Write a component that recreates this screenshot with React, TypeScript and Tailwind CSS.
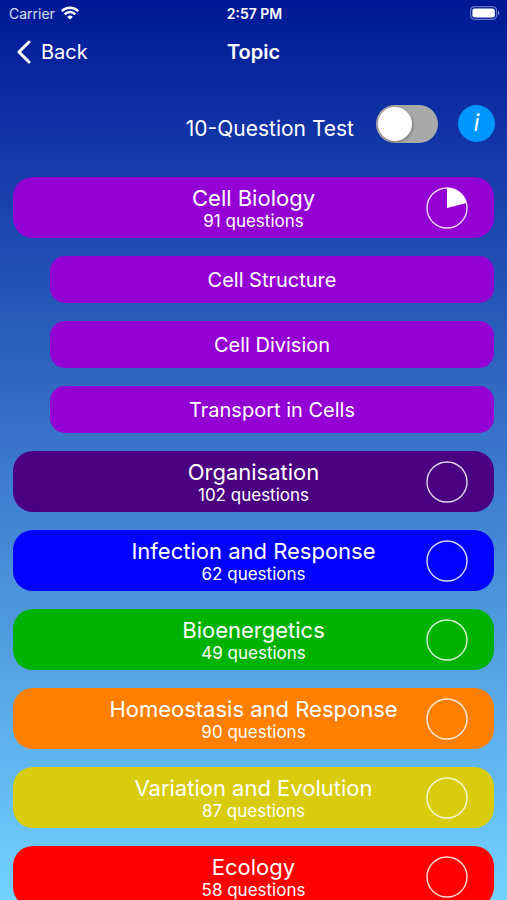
import { useState } from "react"

type Topic = {
  name: string
  questions: number
  color: string
  progress: number
  subtopics?: string[]
}

const topics: Topic[] = [
  {
    name: "Cell Biology",
    questions: 91,
    color: "bg-[#9400d3]",
    progress: 0.21,
    subtopics: ["Cell Structure", "Cell Division", "Transport in Cells"],
  },
  { name: "Organisation", questions: 102, color: "bg-[#4b0082]", progress: 0 },
  { name: "Infection and Response", questions: 62, color: "bg-[#0000ff]", progress: 0 },
  { name: "Bioenergetics", questions: 49, color: "bg-[#00b200]", progress: 0 },
  { name: "Homeostasis and Response", questions: 90, color: "bg-[#ff8000]", progress: 0 },
  { name: "Variation and Evolution", questions: 87, color: "bg-[#d9cc0c]", progress: 0 },
  { name: "Ecology", questions: 58, color: "bg-[#ff0000]", progress: 0 },
]

const ProgressPie = ({ value }: { value: number }) => {
  const angle = value * 2 * Math.PI
  const x = 21 + 20 * Math.sin(angle)
  const y = 21 - 20 * Math.cos(angle)
  return (
    <svg viewBox="0 0 42 42" className="size-[42px]" aria-hidden="true">
      <circle cx="21" cy="21" r="20" fill="none" stroke="#fff" strokeOpacity="0.85" strokeWidth="1.4" />
      {value > 0 && (
        <path
          d={`M21 21V1A20 20 0 ${value > 0.5 ? 1 : 0} 1 ${x} ${y}Z`}
          fill="#fff"
        />
      )}
    </svg>
  )
}

const StatusBar = () => (
  <div className="grid h-[26px] grid-cols-3 items-center pl-[9px] pr-[7px] text-[14px]">
    <div className="flex items-center gap-[6px] text-white/85">
      <span>Carrier</span>
      <svg viewBox="0 0 18 14" className="h-[14px] w-[18px]" fill="none" stroke="#fff" strokeWidth="2.5">
        <path d="M.8 5.1a11.6 11.6 0 0 1 16.4 0" />
        <path d="M3.7 8.3a7.5 7.5 0 0 1 10.6 0" />
        <path d="M9 13.6 6.1 10.9a4.1 4.1 0 0 1 5.8 0Z" fill="#fff" stroke="none" />
      </svg>
    </div>
    <div className="text-center font-semibold">2:57 PM</div>
    <div className="flex justify-end">
      <svg viewBox="0 0 30 14" className="h-[14px] w-[30px]">
        <rect x=".6" y=".6" width="26" height="12.8" rx="4" fill="none" stroke="#fff" strokeOpacity="0.4" strokeWidth="1.2" />
        <rect x="2.4" y="2.4" width="22.4" height="9.2" rx="2.4" fill="#fff" />
        <path d="M28 4.8v4.4a2.4 2.4 0 0 0 0-4.4Z" fill="#fff" fillOpacity="0.5" />
      </svg>
    </div>
  </div>
)

const TopicGroup = ({ topic }: { topic: Topic }) => (
  <>
    <button
      type="button"
      className={`grid h-[61px] w-full shrink-0 grid-cols-[68px_1fr_68px] items-center rounded-[20px] ${topic.color}`}
    >
      <span className="col-start-2 whitespace-nowrap">
        <span className="block text-[22px] leading-[26px]">{topic.name}</span>
        <span className="block text-[17px] leading-[20px]">
          {topic.questions} questions
        </span>
      </span>
      <ProgressPie value={topic.progress} />
    </button>
    {topic.subtopics?.map((name) => (
      <button
        key={name}
        type="button"
        className={`ml-[37px] h-[47px] shrink-0 rounded-[15px] text-[20px] ${topic.color}`}
      >
        {name}
      </button>
    ))}
  </>
)

export default function App() {
  const [shortTest, setShortTest] = useState(false)

  return (
    <div className="flex h-screen flex-col overflow-hidden bg-linear-to-b/srgb from-[#001896] to-[#72d3ff] font-[Inter,'Liberation_Sans',sans-serif] text-white">
      <StatusBar />

      <header className="grid h-13 grid-cols-3 items-center px-4">
        <button type="button" className="flex items-center gap-[10px] text-[20px]">
          <svg viewBox="0 0 15 24" className="h-6 w-[15px]" fill="none" stroke="#fff" strokeWidth="3" strokeLinecap="round" strokeLinejoin="round">
            <path d="M13 2 3 12l10 10" />
          </svg>
          Back
        </button>
        <h1 className="text-center text-[20px] font-semibold">Topic</h1>
      </header>

      <div className="flex h-[99px] items-center justify-end px-3 pb-2">
        <label htmlFor="short-test" className="pt-[10px] pr-[22px] text-[21px]">
          10-Question Test
        </label>
        <input
          id="short-test"
          type="checkbox"
          role="switch"
          checked={shortTest}
          onChange={(e) => setShortTest(e.target.checked)}
          className="h-[38px] w-[62px] appearance-none rounded-full bg-[#aaaaaa] p-[2px] before:block before:size-[34px] before:rounded-full before:bg-white before:shadow-[1px_1px_3px_rgba(0,0,0,0.3)] checked:bg-green-500 checked:before:ml-6"
        />
        <button
          type="button"
          aria-label="About the test"
          className="ml-5 size-[37px] rounded-full bg-[#0096ff] text-[23px] italic"
        >
          i
        </button>
      </div>

      <main className="flex min-h-0 flex-1 flex-col gap-[18px] overflow-y-auto px-[13px] [scrollbar-width:none]">
        {topics.map((topic) => (
          <TopicGroup key={topic.name} topic={topic} />
        ))}
      </main>
    </div>
  )
}
